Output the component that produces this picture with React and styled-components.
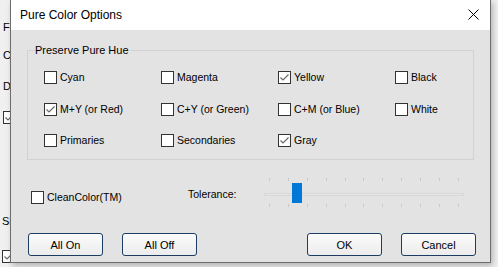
import React from "react";
import styled, { createGlobalStyle } from "styled-components";

const Global = createGlobalStyle`
  html, body { margin: 0; padding: 0; }
  body {
    width: 498px;
    height: 267px;
    overflow: hidden;
    background: #f0f0f0;
    font-family: "Liberation Sans", Arial, sans-serif;
  }
`;

const Desktop = styled.div`
  position: relative;
  width: 498px;
  height: 267px;
  overflow: hidden;
  background: #f0f0f0;
`;

const BackWindow = styled.div`
  display: flex;
  flex-direction: column;
  padding-left: 3px;
  font-size: 11px;
  line-height: 11px;
  color: #000;
  height: 267px;
  box-sizing: border-box;
`;

const BackText = styled.div`
  margin-top: ${(p) => p.$top}px;
  margin-left: ${(p) => p.$left || 0}px;
`;

const BackBox = styled.div`
  margin-top: ${(p) => p.$top}px;
  margin-left: ${(p) => p.$left || 0}px;
  width: 11px;
  height: 11px;
  border: 1px solid #333;
  background: #fff;
  display: flex;
  align-items: center;
  justify-content: center;
`;

const Dialog = styled.div`
  position: absolute;
  left: 10px;
  top: -1px;
  width: 481px;
  height: 264px;
  box-sizing: border-box;
  border: 1px solid #6d6d6d;
  background: #e3e3e3;
  box-shadow: 2px 3px 6px rgba(0, 0, 0, 0.25);
  display: flex;
  flex-direction: column;
`;

const TitleBar = styled.div`
  height: 30px;
  flex: none;
  background: #fff;
  display: flex;
  align-items: center;
  justify-content: space-between;
  padding: 0 9px 1px 9px;
  box-sizing: border-box;
`;

const Title = styled.div`
  font-size: 12px;
  color: #000;
  line-height: 14px;
`;

const CloseButton = styled.div`
  width: 12px;
  height: 12px;
  display: flex;
  align-items: center;
  justify-content: center;
  margin-right: 2px;
`;

const Body = styled.div`
  flex: 1;
  display: flex;
  flex-direction: column;
  padding: 0 14px 0 16px;
  font-size: 10.5px;
  color: #000;
`;

const GroupBox = styled.div`
  position: relative;
  margin-top: 20px;
  border: 1px solid #d2d2d2;
  padding: 20px 0 12px 16px;
  margin-right: 2px;
`;

const Legend = styled.div`
  position: absolute;
  top: -7px;
  left: 7px;
  padding: 0 1px 0 0;
  background: #e3e3e3;
  font-size: 11px;
  line-height: 13px;
`;

const Grid = styled.div`
  display: grid;
  grid-template-columns: repeat(4, 117px);
  grid-auto-rows: 13px;
  row-gap: 18.5px;
`;

const CheckItem = styled.label`
  display: flex;
  align-items: center;
  height: 13px;
  gap: 3px;
  line-height: 13px;
  white-space: nowrap;
  width: ${(p) => (p.$width ? `${p.$width}px` : "auto")};
  margin-top: ${(p) => p.$top || 0}px;
  margin-left: ${(p) => p.$left || 0}px;
  flex: none;
`;

const Box = styled.span`
  width: 13px;
  height: 13px;
  box-sizing: border-box;
  border: 1px solid #333;
  background: #fff;
  display: flex;
  align-items: center;
  justify-content: center;
  flex: none;
`;

const OptionsRow = styled.div`
  display: flex;
  align-items: flex-start;
  margin-top: 16px;
`;

const FieldLabel = styled.div`
  width: 76px;
  line-height: 13px;
  margin-top: 12px;
  flex: none;
`;

const Slider = styled.div`
  position: relative;
  width: 200px;
  height: 32px;
  flex: none;
`;

const TickRow = styled.div`
  position: absolute;
  left: 5px;
  width: 190px;
  top: ${(p) => p.$top}px;
  display: flex;
  justify-content: space-between;
`;

const Tick = styled.span`
  width: 1px;
  height: 3px;
  background: #c9c9c9;
`;

const Track = styled.div`
  position: absolute;
  left: 0;
  right: 0;
  top: 17px;
  height: 3px;
  box-sizing: border-box;
  border: 1px solid #d6d6d6;
  background: #e7e7e7;
`;

const Thumb = styled.div`
  position: absolute;
  left: 28px;
  top: 7px;
  width: 10px;
  height: 20px;
  background: #0078d7;
`;

const ButtonRow = styled.div`
  display: flex;
  justify-content: space-between;
  margin-top: 25px;
  padding-left: 1px;
`;

const ButtonGroup = styled.div`
  display: flex;
  gap: 19px;
`;

const Button = styled.button`
  width: 75px;
  height: 23px;
  box-sizing: border-box;
  border: 1px solid #1b3d63;
  border-radius: 3px;
  background: linear-gradient(#fbfbfb, #ececec);
  font-family: "Liberation Sans", Arial, sans-serif;
  font-size: 11px;
  color: #000;
  padding: 0;
  display: flex;
  align-items: center;
  justify-content: center;
`;

const Check = () => (
  <svg width="11" height="11" viewBox="0 0 11 11">
    <path d="M1.5 5.5 L4 8 L9.5 2.5" fill="none" stroke="#6a6a6a" strokeWidth="1.2" />
  </svg>
);

const CheckBox = ({ label, checked, ...rest }) => (
  <CheckItem {...rest}>
    <Box>{checked && <Check />}</Box>
    {label}
  </CheckItem>
);

const options = [
  ["Cyan", false],
  ["Magenta", false],
  ["Yellow", true],
  ["Black", false],
  ["M+Y (or Red)", true],
  ["C+Y (or Green)", false],
  ["C+M (or Blue)", false],
  ["White", false],
  ["Primaries", false],
  ["Secondaries", false],
  ["Gray", true],
];

export default function App() {
  const ticks = Array.from({ length: 11 });
  return (
    <>
      <Global />
      <Desktop>
        <BackWindow>
          <BackText $top={22}>F</BackText>
          <BackText $top={17}>C</BackText>
          <BackText $top={20}>D</BackText>
          <BackBox $top={19}>
            <Check />
          </BackBox>
          <BackText $top={92} $left={-1}>Si</BackText>
          <BackBox $top={23} $left={-1}>
            <Check />
          </BackBox>
        </BackWindow>
        <Dialog>
          <TitleBar>
            <Title>Pure Color Options</Title>
            <CloseButton>
              <svg width="11" height="11" viewBox="0 0 11 11">
                <path d="M0.5 0.5 L10.5 10.5 M10.5 0.5 L0.5 10.5" stroke="#000" strokeWidth="1" />
              </svg>
            </CloseButton>
          </TitleBar>
          <Body>
            <GroupBox>
              <Legend>Preserve Pure Hue</Legend>
              <Grid>
                {options.map(([label, checked]) => (
                  <CheckBox key={label} label={label} checked={checked} />
                ))}
              </Grid>
            </GroupBox>
            <OptionsRow>
              <CheckBox label="CleanColor(TM)" $width={157} $top={15} $left={4} />
              <FieldLabel>Tolerance:</FieldLabel>
              <Slider>
                <TickRow $top={2}>
                  {ticks.map((_, i) => (
                    <Tick key={i} />
                  ))}
                </TickRow>
                <Track />
                <Thumb />
                <TickRow $top={28}>
                  {ticks.map((_, i) => (
                    <Tick key={i} />
                  ))}
                </TickRow>
              </Slider>
            </OptionsRow>
            <ButtonRow>
              <ButtonGroup>
                <Button>All On</Button>
                <Button>All Off</Button>
              </ButtonGroup>
              <ButtonGroup>
                <Button>OK</Button>
                <Button>Cancel</Button>
              </ButtonGroup>
            </ButtonRow>
          </Body>
        </Dialog>
      </Desktop>
    </>
  );
}
